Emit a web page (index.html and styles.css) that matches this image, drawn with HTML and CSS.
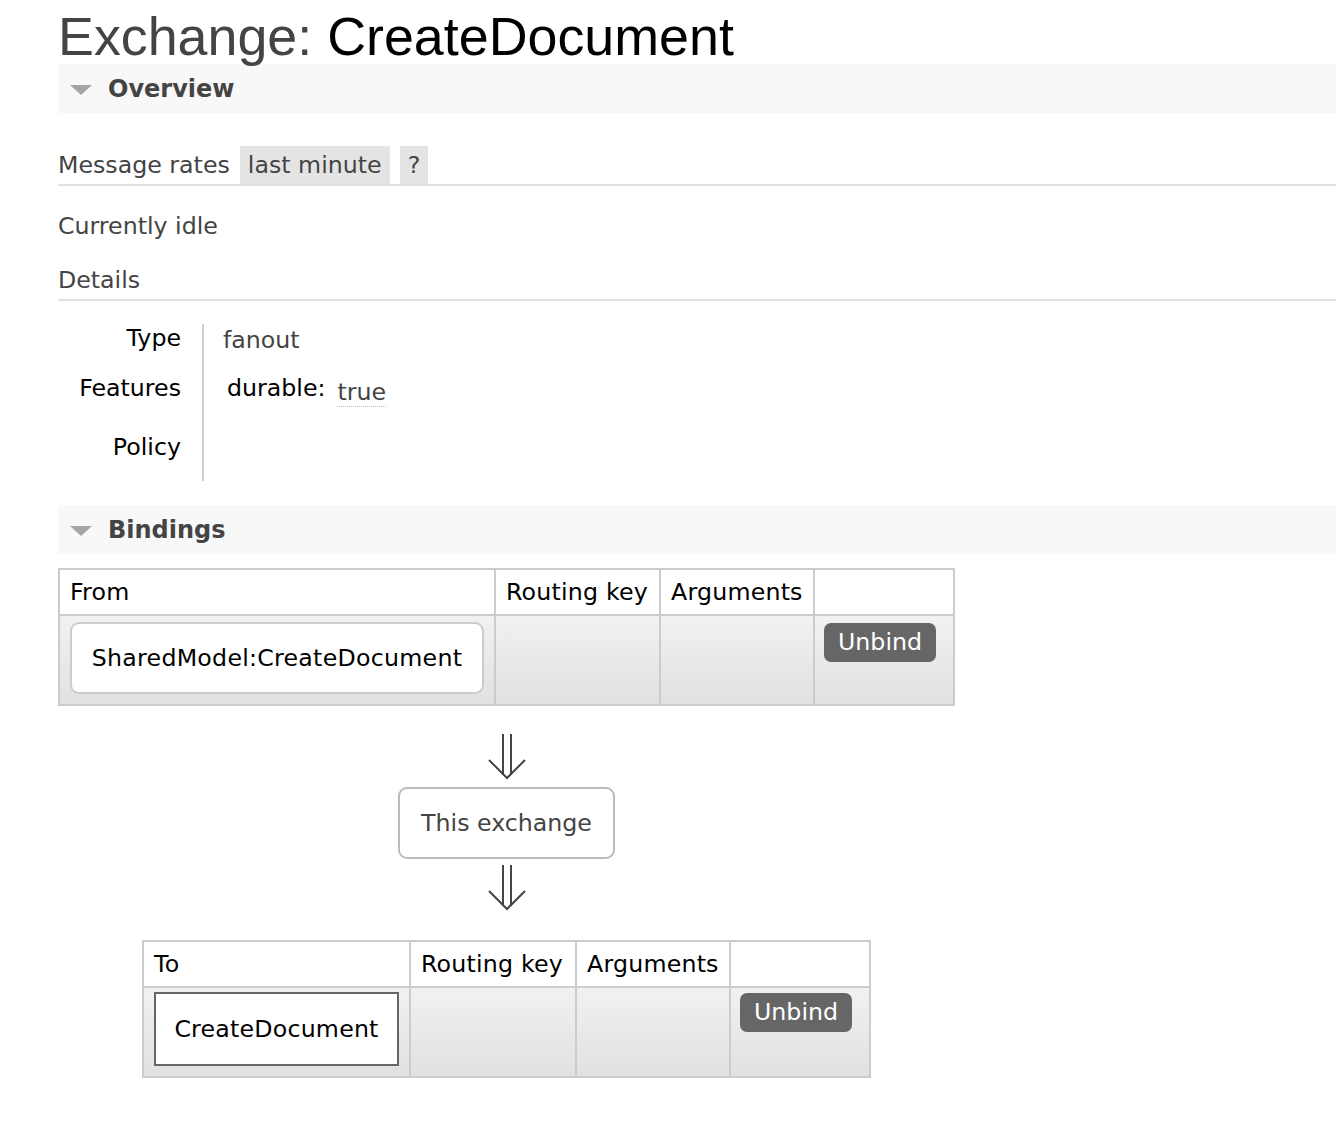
FILE: index.html
```html
<!DOCTYPE html>
<html>
<head>
<meta charset="utf-8">
<title>Exchange: CreateDocument</title>
<link rel="stylesheet" href="styles.css">
</head>
<body>
<div class="main">
  <h1 class="page-title">Exchange: <b class="title-name">CreateDocument</b></h1>

  <div class="section">
    <h2 class="section-head"><span class="tri"></span>Overview</h2>
    <div class="rates-bar">
      <span class="rates-title">Message rates</span>
      <span class="rates-opt">last minute</span>
      <span class="rates-opt">?</span>
    </div>
    <p class="idle">Currently idle</p>
    <h3 class="sub-head">Details</h3>
    <table class="facts">
      <tr>
        <th class="fact-label">Type</th>
        <td class="fact-value">fanout</td>
      </tr>
      <tr>
        <th class="fact-label">Features</th>
        <td class="fact-value features">
          <table class="mini">
            <tr><th class="mini-key">durable:</th><td class="mini-val"><abbr class="flag">true</abbr></td></tr>
          </table>
        </td>
      </tr>
      <tr>
        <th class="fact-label">Policy</th>
        <td class="fact-value"></td>
      </tr>
    </table>
  </div>

  <div class="section section-bindings">
    <h2 class="section-head"><span class="tri"></span>Bindings</h2>
    <div class="bindings-wrapper">
      <table class="bindings bindings-from">
        <colgroup>
          <col class="c-from"><col class="c-key"><col class="c-args"><col class="c-act">
        </colgroup>
        <tr>
          <th class="b-head">From</th>
          <th class="b-head">Routing key</th>
          <th class="b-head">Arguments</th>
          <th class="b-head"></th>
        </tr>
        <tr>
          <td class="b-cell"><span class="box-exchange">SharedModel:CreateDocument</span></td>
          <td class="b-cell"></td>
          <td class="b-cell"></td>
          <td class="b-cell b-action"><span class="unbind">Unbind</span></td>
        </tr>
      </table>

      <svg class="arrow" width="40" height="46" viewBox="0 0 40 46"><path d="M16 0V41M24 0V41M2 26L20 44L38 26" fill="none" stroke="#444" stroke-width="2"/></svg>
      <div class="this-exchange">This exchange</div>
      <svg class="arrow arrow-second" width="40" height="46" viewBox="0 0 40 46"><path d="M16 0V41M24 0V41M2 26L20 44L38 26" fill="none" stroke="#444" stroke-width="2"/></svg>

      <table class="bindings bindings-to">
        <colgroup>
          <col class="c-to"><col class="c-key2"><col class="c-args"><col class="c-act">
        </colgroup>
        <tr>
          <th class="b-head">To</th>
          <th class="b-head">Routing key</th>
          <th class="b-head">Arguments</th>
          <th class="b-head"></th>
        </tr>
        <tr>
          <td class="b-cell b-cell-q"><span class="box-queue">CreateDocument</span></td>
          <td class="b-cell"></td>
          <td class="b-cell"></td>
          <td class="b-cell b-action b-action-q"><span class="unbind">Unbind</span></td>
        </tr>
      </table>
    </div>
  </div>
</div>
</body>
</html>
```

FILE: styles.css
```css
html, body {
  margin: 0;
  padding: 0;
  background: #fff;
}

body {
  font-family: "DejaVu Sans", Verdana, sans-serif;
  font-size: 23.7px;
  line-height: 28px;
  color: #444;
}

.main {
  padding-left: 58px;
}

.page-title {
  margin: 8px 0 0 0;
  font-family: "Liberation Sans", Arial, sans-serif;
  font-size: 53.8px;
  line-height: 56px;
  font-weight: 400;
  color: #444;
}

.title-name {
  font-weight: 400;
  color: #000;
}

.section-head {
  margin: 0;
  height: 49px;
  display: flex;
  align-items: center;
  background: #f8f8f8;
  font-size: 24px;
  font-weight: 700;
  color: #444;
}

.tri {
  width: 0;
  height: 0;
  border-left: 11px solid transparent;
  border-right: 11px solid transparent;
  border-top: 10px solid #a5a5a5;
  margin: 3px 16px 0 12px;
}

.rates-bar {
  margin-top: 33px;
  display: flex;
  align-items: flex-end;
  border-bottom: 2px solid #e2e2e2;
}

.rates-title {
  padding: 5px 0;
  margin-right: 10px;
}

.rates-opt {
  background: #e4e4e4;
  padding: 5px 8px;
  margin-right: 10px;
}

.idle {
  margin: 26px 0 0;
}

.sub-head {
  margin: 26px 0 0;
  padding-bottom: 5px;
  border-bottom: 2px solid #e2e2e2;
  font-size: 23.7px;
  font-weight: 400;
}

.facts {
  margin-top: 23px;
  border-collapse: collapse;
}

.fact-label {
  width: 123px;
  padding: 0 21px 20px 0;
  text-align: right;
  vertical-align: top;
  font-weight: 400;
  color: #000;
  border-right: 2px solid #cfcfcf;
}

.fact-value {
  padding: 2px 0 20px 19px;
  vertical-align: top;
  color: #444;
}

.fact-value.features {
  padding-top: 0;
  padding-bottom: 27px;
}

.mini {
  border-collapse: collapse;
}

.mini-key {
  padding: 0 5px 0 4px;
  font-weight: 400;
  color: #000;
  text-align: left;
  vertical-align: top;
}

.mini-val {
  padding: 4px 0 0 7px;
  vertical-align: top;
  color: #444;
}

.flag {
  text-decoration: none;
  border-bottom: 1px dotted #bbb;
}

.section-bindings {
  margin-top: 24px;
}

.bindings-wrapper {
  width: fit-content;
  margin-top: 14px;
  text-align: center;
}

.bindings {
  border-spacing: 2px;
  background: #cccccc;
  table-layout: fixed;
  text-align: left;
  margin: 0 auto;
}

.bindings-from {
  width: 897px;
}

.bindings-to {
  width: 729px;
  margin-top: 29px;
}

.c-from { width: 434px; }
.c-to { width: 265px; }
.c-key { width: 163px; }
.c-key2 { width: 164px; }
.c-args { width: 152px; }
.c-act { width: 138px; }

.b-head {
  height: 44px;
  padding: 0 10px;
  line-height: 44px;
  font-weight: 400;
  color: #000;
  background: #fff;
  text-align: left;
  white-space: nowrap;
  letter-spacing: 0.2px;
}

.b-cell {
  padding: 6px 10px 10px;
  vertical-align: top;
  background: linear-gradient(#f1f1f1, #e1e1e1);
}

.b-cell-q {
  padding-top: 4px;
}

.b-action {
  padding: 7px 9px 10px;
}

.b-action-q {
  padding-top: 5px;
}

.box-exchange {
  display: block;
  padding: 20px 10px;
  border: 2px solid #cccccc;
  border-radius: 9px;
  background: #fff;
  color: #000;
  text-align: center;
  white-space: nowrap;
  letter-spacing: 0.25px;
}

.box-queue {
  display: block;
  padding: 21px 10px;
  border: 2px solid #666;
  background: #fff;
  color: #000;
  text-align: center;
  white-space: nowrap;
  letter-spacing: 0.2px;
}

.unbind {
  display: inline-block;
  padding: 5px 14px;
  line-height: 29px;
  border-radius: 7px;
  background: #666;
  color: #fff;
}

.arrow {
  display: block;
  margin: 28px auto 0;
}

.arrow-second {
  margin-top: 6px;
}

.this-exchange {
  width: fit-content;
  margin: 7px auto 0;
  padding: 20px 21px 20px;
  border: 2px solid #bbbbbb;
  border-radius: 9px;
  color: #444;
}
```
